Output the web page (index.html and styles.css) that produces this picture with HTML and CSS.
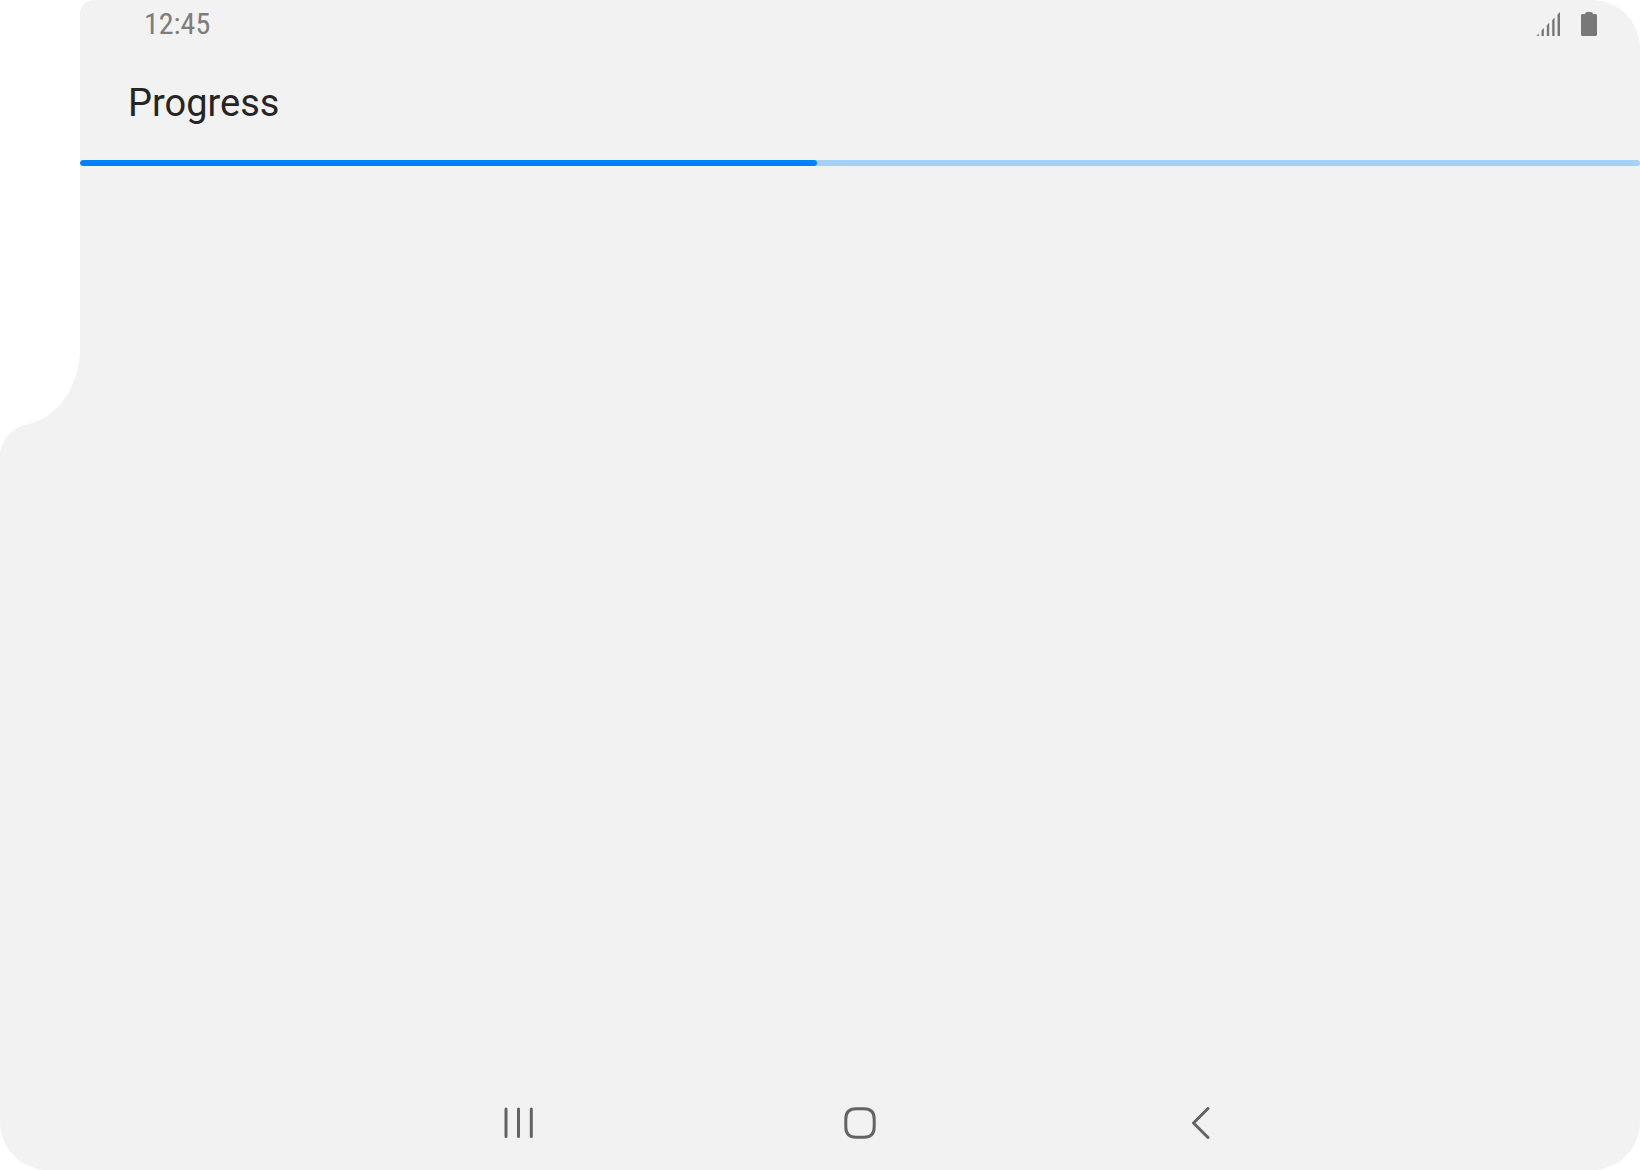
FILE: index.html
```html
<!DOCTYPE html>
<html lang="en">
<head>
<meta charset="utf-8">
<meta name="viewport" content="width=device-width, initial-scale=1">
<title>Progress</title>
<link rel="stylesheet" href="styles.css">
</head>
<body>
<div class="screen">
  <svg class="cutout" viewBox="0 0 96 464" aria-hidden="true">
    <path d="M0 0H94C86 0 80 6 80 14V348C80 386 58 417 29 424C13 427 3 437 0 452Z"/>
  </svg>
  <div class="status">
    <time class="clock" datetime="12:45">12:45</time>
    <div class="indicators">
      <svg class="signal" width="24" height="24" viewBox="0 0 24 24" role="img" aria-label="Signal strength">
        <path d="M.5 24L2.800 21.500V24ZM5.500 24V18.500L7.900 16V24ZM10.800 24V13.200L13.200 10.800V24ZM16.200 24V8L18.600 5.500V24ZM21.500 24V2.500L24 0V24Z"/>
      </svg>
      <svg class="battery" width="16" height="24" viewBox="0 0 16 24" role="img" aria-label="Battery full">
        <path d="M4 2C4 1 5 0 6 0H10C11 0 12 1 12 2H14.500Q16 2 16 3.500V22.500Q16 24 14.500 24H1.500Q0 24 0 22.500V3.500Q0 2 1.500 2Z"/>
      </svg>
    </div>
  </div>
  <header class="appbar">
    <h1 class="title" id="title">Progress</h1>
  </header>
  <progress class="bar" value="47.25" max="100" aria-labelledby="title"></progress>
  <main class="content"></main>
  <nav class="navbar" aria-label="System navigation">
    <button class="key" type="button" aria-label="Recents">
      <svg width="32" height="32" viewBox="0 0 32 32"><path d="M3 2V29.500M15.500 2V29.500M28.300 2V29.500"/></svg>
    </button>
    <button class="key" type="button" aria-label="Home">
      <svg width="32" height="32" viewBox="0 0 32 32"><path d="M12 1.800H20Q30.200 1.800 30.200 12V20Q30.200 30.200 20 30.200H12Q1.800 30.200 1.800 20V12Q1.800 1.800 12 1.800Z"/></svg>
    </button>
    <button class="key" type="button" aria-label="Back">
      <svg width="32" height="32" viewBox="0 0 32 32"><path d="M23 1.500L8.500 16L23 30.500"/></svg>
    </button>
  </nav>
</div>
</body>
</html>
```
FILE: styles.css
```css
* {
  box-sizing: border-box;
}

body {
  margin: 0;
  background: #fff;
  font-family: Roboto, sans-serif;
}

.screen {
  position: relative;
  display: flex;
  flex-direction: column;
  min-height: 100vh;
  padding-left: 80px;
  overflow: hidden;
  border-radius: 0 48px 48px 48px;
  background: #f2f2f2;
}

.cutout {
  position: absolute;
  top: 0;
  left: 0;
  width: 96px;
  height: 464px;
  fill: #fff;
}

.status {
  display: flex;
  align-items: center;
  justify-content: space-between;
  height: 48px;
  padding: 0 43px 0 64px;
  color: #7c7c7c;
}

.clock {
  font: 30px/48px "Roboto Condensed", Roboto, sans-serif;
}

.indicators {
  display: flex;
  gap: 21px;
  fill: #787878;
}

.appbar {
  padding: 31px 48px 33px;
}

.title {
  margin: 0;
  font-size: 38px;
  font-weight: 400;
  line-height: 48px;
  color: #252525;
}

.bar {
  display: block;
  width: 100%;
  height: 6px;
  border: 0;
  border-radius: 3px;
  overflow: hidden;
  background: #a8d0f5;
  appearance: none;
}

.bar::-webkit-progress-bar {
  background: #a8d0f5;
}

.bar::-webkit-progress-value {
  border-radius: 3px;
  background: #0381fe;
}

.content {
  flex: 1;
}

.navbar {
  display: flex;
  justify-content: center;
  height: 95px;
}

.key {
  display: flex;
  flex: 1;
  align-items: center;
  justify-content: center;
  max-width: 341px;
  padding: 0;
  border: 0;
  background: none;
}

.key svg {
  fill: none;
  stroke: #636363;
  stroke-width: 3;
  stroke-linecap: round;
  stroke-linejoin: round;
}
```
